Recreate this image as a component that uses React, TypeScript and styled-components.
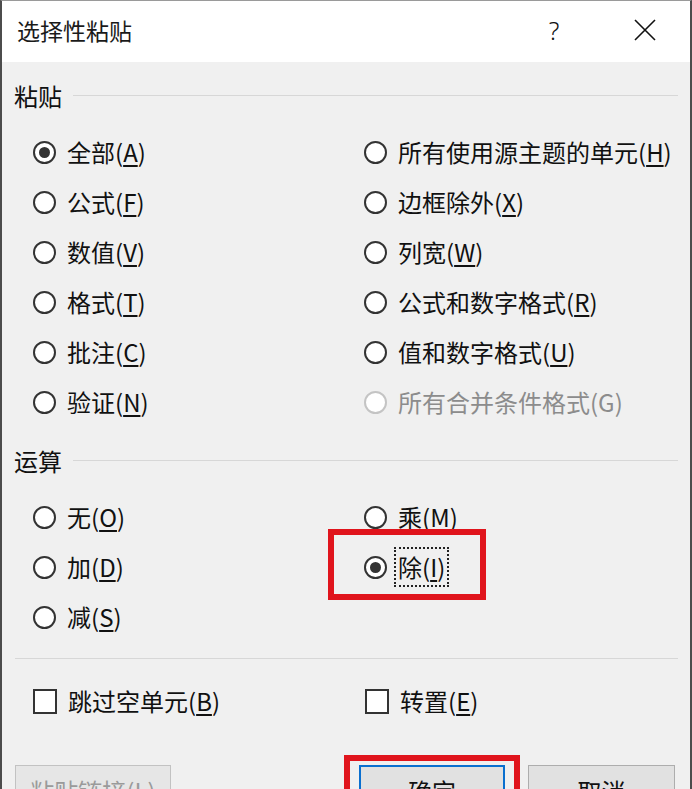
import React from 'react';
import styled, { createGlobalStyle } from 'styled-components';

const GlobalStyle = createGlobalStyle`
  html, body {
    margin: 0;
    padding: 0;
    background: #f0f0f0;
  }
  body {
    font-family: "Noto Sans CJK SC", "Noto Sans", sans-serif;
    color: #111;
  }
`;

const Dialog = styled.div`
  width: 692px;
  height: 789px;
  box-sizing: border-box;
  overflow: hidden;
  display: flex;
  flex-direction: column;
  border-top: 1px solid #9a9a9a;
  border-left: 2px solid #4c4c4c;
  border-right: 2px solid #4c4c4c;
  background: #f0f0f0;
`;

const TitleBar = styled.div`
  height: 61px;
  box-sizing: border-box;
  flex-shrink: 0;
  display: flex;
  align-items: center;
  background: #fff;
  padding: 0 0 4px 15px;
`;

const Title = styled.div`
  flex: 1;
  font-size: 23px;
  color: #1a1a1a;
`;

const TitleButton = styled.div<{ $w: number }>`
  width: ${(p) => p.$w}px;
  height: 40px;
  display: flex;
  align-items: center;
  justify-content: center;
  font-family: "Noto Sans", sans-serif;
  font-size: 25px;
  font-weight: 300;
  color: #111;
`;

const TitleButtons = styled.div`
  display: flex;
  align-items: center;
  gap: 48px;
  margin-right: 22px;
`;

const Body = styled.div`
  flex: 1;
  padding: 18px 12px 0 12px;
`;

const Section = styled.section`
  & + & {
    margin-top: 18px;
  }
`;

const GroupHeader = styled.div`
  height: 30px;
  display: flex;
  align-items: center;
  gap: 11px;
  font-size: 24px;
`;

const Rule = styled.div`
  flex: 1;
  height: 1px;
  background: #d7d7d7;
`;

const OptionGrid = styled.div<{ $rows: number }>`
  display: grid;
  grid-template-columns: 331px 1fr;
  grid-template-rows: repeat(${(p) => p.$rows}, 50px);
  grid-auto-flow: column;
  margin-top: 17px;
  padding-left: 19px;
`;

const Option = styled.label<{ $disabled?: boolean }>`
  position: relative;
  display: flex;
  align-items: center;
  gap: 11px;
  font-size: 24px;
  line-height: 32px;
  color: ${(p) => (p.$disabled ? '#8c8c8c' : '#111')};
  white-space: nowrap;
`;

const Radio = styled.span<{ $checked?: boolean; $disabled?: boolean }>`
  width: 23px;
  height: 23px;
  box-sizing: border-box;
  border-radius: 50%;
  border: 2px solid ${(p) => (p.$disabled ? '#c4c4c4' : '#333')};
  background: #fff;
  display: flex;
  align-items: center;
  justify-content: center;
  flex-shrink: 0;

  &::after {
    content: '';
    display: ${(p) => (p.$checked ? 'block' : 'none')};
    width: 11px;
    height: 11px;
    border-radius: 50%;
    background: #333;
  }
`;

const Checkbox = styled.span`
  width: 24px;
  height: 25px;
  box-sizing: border-box;
  border: 2px solid #333;
  background: #fff;
  flex-shrink: 0;
`;

const Text = styled.span<{ $focused?: boolean }>`
  outline: ${(p) => (p.$focused ? '2px dotted #222' : 'none')};
  outline-offset: 2px;

  u {
    text-underline-offset: 3px;
  }
`;

const Highlight = styled.div<{ $top: number; $left: number; $w: number; $h: number }>`
  position: absolute;
  top: ${(p) => p.$top}px;
  left: ${(p) => p.$left}px;
  width: ${(p) => p.$w}px;
  height: ${(p) => p.$h}px;
  box-sizing: border-box;
  border: 6px solid #e0141c;
  pointer-events: none;
`;

const Separator = styled.div`
  height: 1px;
  background: #d7d7d7;
  margin: 16px 0 0 1px;
`;

const CheckRow = styled.div`
  display: grid;
  grid-template-columns: 332px 1fr;
  height: 50px;
  margin-top: 17px;
  padding-left: 19px;
`;

const Footer = styled.div`
  display: flex;
  align-items: flex-start;
  margin-top: 39px;
  padding: 0 3px 0 1px;
`;

const Spacer = styled.div`
  flex: 1;
`;

const Button = styled.button<{ $w: number; $primary?: boolean }>`
  width: ${(p) => p.$w}px;
  height: 50px;
  box-sizing: border-box;
  background: #e1e1e1;
  border: ${(p) => (p.$primary ? '2px solid #0a6fcf' : '1px solid #adadad')};
  font-family: "Noto Sans CJK SC", sans-serif;
  font-size: 24px;
  color: #111;
  padding: 0;

  &:disabled {
    color: #9a9a9a;
    border-color: #c2c2c2;
    background: #e6e6e6;
  }
`;

const ButtonSlot = styled.div`
  position: relative;
  display: flex;
  gap: 23px;
`;

type Item = { text: string; key?: string; checked?: boolean; disabled?: boolean; focused?: boolean };

const pasteItems: Item[] = [
  { text: '全部', key: 'A', checked: true },
  { text: '公式', key: 'F' },
  { text: '数值', key: 'V' },
  { text: '格式', key: 'T' },
  { text: '批注', key: 'C' },
  { text: '验证', key: 'N' },
  { text: '所有使用源主题的单元', key: 'H' },
  { text: '边框除外', key: 'X' },
  { text: '列宽', key: 'W' },
  { text: '公式和数字格式', key: 'R' },
  { text: '值和数字格式', key: 'U' },
  { text: '所有合并条件格式(G)', disabled: true },
];

const opItems: Item[] = [
  { text: '无', key: 'O' },
  { text: '加', key: 'D' },
  { text: '减', key: 'S' },
  { text: '乘', key: 'M' },
  { text: '除', key: 'I', checked: true, focused: true },
];

const Label = ({ item }: { item: Item }) => (
  <Text $focused={item.focused}>
    {item.text}
    {item.key && (
      <>
        (<u>{item.key}</u>)
      </>
    )}
  </Text>
);

const RadioOption = ({ item }: { item: Item }) => (
  <Option $disabled={item.disabled}>
    <Radio $checked={item.checked} $disabled={item.disabled} />
    <Label item={item} />
    {item.focused && <Highlight $top={-13} $left={-36} $w={158} $h={71} />}
  </Option>
);

const CloseIcon = () => (
  <svg width="22" height="22" viewBox="0 0 22 22">
    <path d="M1 1 L21 21 M21 1 L1 21" stroke="#111" strokeWidth="1.6" fill="none" />
  </svg>
);

export default function App() {
  return (
    <>
      <GlobalStyle />
      <Dialog>
        <TitleBar>
          <Title>选择性粘贴</Title>
          <TitleButtons>
            <TitleButton $w={40}>?</TitleButton>
            <TitleButton $w={46}>
              <CloseIcon />
            </TitleButton>
          </TitleButtons>
        </TitleBar>
        <Body>
          <Section>
            <GroupHeader>
              粘贴
              <Rule />
            </GroupHeader>
            <OptionGrid $rows={6}>
              {pasteItems.map((item) => (
                <RadioOption key={item.text} item={item} />
              ))}
            </OptionGrid>
          </Section>
          <Section>
            <GroupHeader>
              运算
              <Rule />
            </GroupHeader>
            <OptionGrid $rows={3}>
              {opItems.map((item) => (
                <RadioOption key={item.text} item={item} />
              ))}
            </OptionGrid>
          </Section>
          <Separator />
          <CheckRow>
            <Option>
              <Checkbox />
              <Label item={{ text: '跳过空单元', key: 'B' }} />
            </Option>
            <Option>
              <Checkbox />
              <Label item={{ text: '转置', key: 'E' }} />
            </Option>
          </CheckRow>
          <Footer>
            <Button $w={156} disabled>
              粘贴链接(L)
            </Button>
            <Spacer />
            <ButtonSlot>
              <Button $w={146} $primary>
                确定
              </Button>
              <Button $w={147}>取消</Button>
              <Highlight $top={-10} $left={-15} $w={176} $h={80} />
            </ButtonSlot>
          </Footer>
        </Body>
      </Dialog>
    </>
  );
}
